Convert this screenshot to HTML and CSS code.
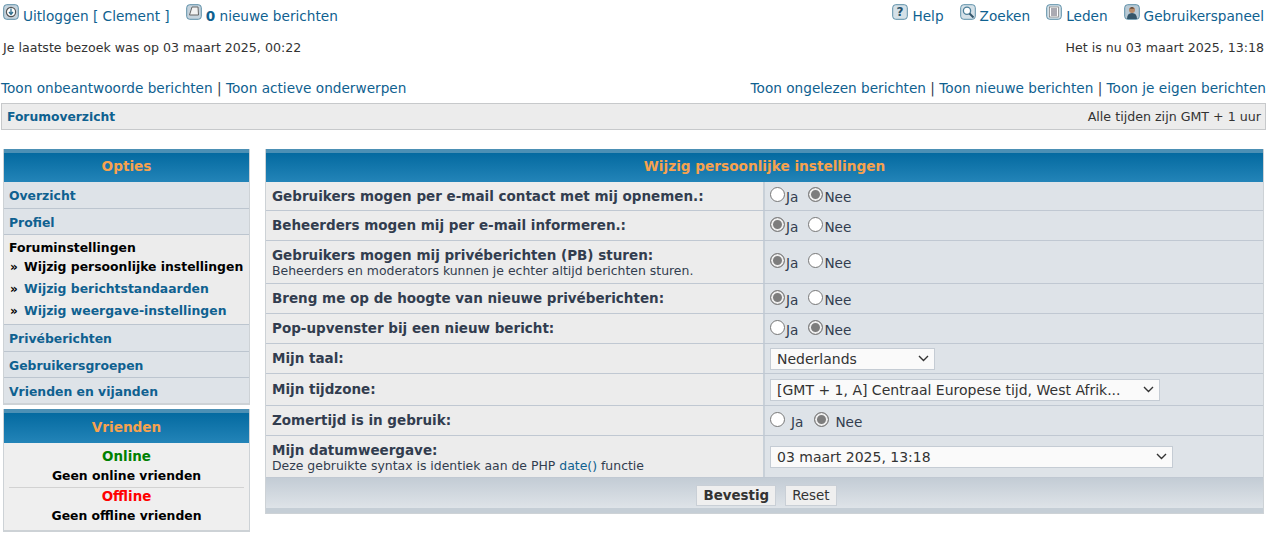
FILE: index.html
```html
<!DOCTYPE html>
<html lang="nl">
<head>
<meta charset="utf-8">
<title>Wijzig persoonlijke instellingen</title>
<link rel="stylesheet" href="styles.css">
</head>
<body>
<div class="top">
  <div class="top-side">
    <a class="ti first" href="#"><svg class="ico" viewBox="0 0 16 16"><rect x=".7" y=".7" width="14.6" height="14.6" rx="3" fill="#c5d3dd" stroke="#5d8fa8"/><circle cx="8" cy="8" r="4.6" fill="#fff" stroke="#555" stroke-width="1.2"/><path d="M8 4.5v5M6 8l2 2.4L10 8" fill="none" stroke="#2f6f8f" stroke-width="1.3"/></svg>Uitloggen [ Clement ]</a>
    <a class="ti" href="#"><svg class="ico" viewBox="0 0 16 16"><rect x=".7" y=".7" width="14.6" height="14.6" rx="3" fill="#c5d3dd" stroke="#5d8fa8"/><path d="M6 3h6l.5 8h-9z" fill="#f2f2f2" stroke="#666"/></svg><b>0</b>&nbsp;nieuwe berichten</a>
  </div>
  <div class="top-side">
    <a class="ti" href="#"><svg class="ico" viewBox="0 0 16 16"><rect x=".7" y=".7" width="14.6" height="14.6" rx="3" fill="#d5e1e8" stroke="#5d8fa8"/><text x="8" y="12.4" text-anchor="middle" class="qm">?</text></svg>Help</a>
    <a class="ti" href="#"><svg class="ico" viewBox="0 0 16 16"><rect x=".7" y=".7" width="14.6" height="14.6" rx="3" fill="#d5e1e8" stroke="#5d8fa8"/><circle cx="7" cy="6.8" r="3.6" fill="#fff" stroke="#4d7f99" stroke-width="1.3"/><path d="M9.5 9.5l4 4" stroke="#33566b" stroke-width="2"/></svg>Zoeken</a>
    <a class="ti" href="#"><svg class="ico" viewBox="0 0 16 16"><rect x=".7" y=".7" width="14.6" height="14.6" rx="3" fill="#d5e1e8" stroke="#5d8fa8"/><rect x="3.5" y="3" width="9" height="10" fill="#fff" stroke="#777" stroke-width=".7"/><path d="M5 5h6M5 7h6M5 9h6M5 11h6" stroke="#445" stroke-width=".9"/></svg>Leden</a>
    <a class="ti" href="#"><svg class="ico" viewBox="0 0 16 16"><rect x=".7" y=".7" width="14.6" height="14.6" rx="3" fill="#b9cad5" stroke="#5d8fa8"/><circle cx="8" cy="6" r="3" fill="#b98a68"/><path d="M5 5.5Q8 1 11 5.5L10.4 4.4H5.6z" fill="#3a2c22"/><path d="M3 15q0-6 5-6t5 6z" fill="#35566a"/></svg>Gebruikerspaneel</a>
  </div>
</div>
<div class="dates"><span>Je laatste bezoek was op 03 maart 2025, 00:22</span><span>Het is nu 03 maart 2025, 13:18</span></div>
<div class="quick">
  <div><a href="#">Toon onbeantwoorde berichten</a> | <a href="#">Toon actieve onderwerpen</a></div>
  <div><a href="#">Toon ongelezen berichten</a> | <a href="#">Toon nieuwe berichten</a> | <a href="#">Toon je eigen berichten</a></div>
</div>
<div class="crumb"><a href="#"><b>Forumoverzicht</b></a><span>Alle tijden zijn GMT + 1 uur</span></div>

<div class="columns">
  <aside class="side">
    <section class="panel">
      <h2 class="head">Opties</h2>
      <a class="item" href="#">Overzicht</a>
      <a class="item" href="#">Profiel</a>
      <div class="group">
        <div class="group-title">Foruminstellingen</div>
        <div class="sub sub-active"><span class="raquo">»</span>Wijzig persoonlijke instellingen</div>
        <div class="sub"><span class="raquo">»</span><a href="#">Wijzig berichtstandaarden</a></div>
        <div class="sub"><span class="raquo">»</span><a href="#">Wijzig weergave-instellingen</a></div>
      </div>
      <a class="item" href="#">Privéberichten</a>
      <a class="item" href="#">Gebruikersgroepen</a>
      <a class="item item-last" href="#">Vrienden en vijanden</a>
    </section>
    <section class="panel friends">
      <h2 class="head head-tall">Vrienden</h2>
      <div class="fbody">
        <div class="fblock">
          <div class="online">Online</div>
          <div>Geen online vrienden</div>
        </div>
        <div class="fblock">
          <div class="offline">Offline</div>
          <div>Geen offline vrienden</div>
        </div>
      </div>
    </section>
  </aside>

  <main class="main">
    <h2 class="head head-main">Wijzig persoonlijke instellingen</h2>
    <div class="row h29"><div class="lab"><b>Gebruikers mogen per e-mail contact met mij opnemen.:</b></div><div class="val"><span class="radio"></span><span class="rl">Ja</span><span class="radio on"></span><span class="rl">Nee</span></div></div>
    <div class="row h30"><div class="lab"><b>Beheerders mogen mij per e-mail informeren.:</b></div><div class="val"><span class="radio on"></span><span class="rl">Ja</span><span class="radio"></span><span class="rl">Nee</span></div></div>
    <div class="row h43"><div class="lab"><b>Gebruikers mogen mij privéberichten (PB) sturen:</b><small>Beheerders en moderators kunnen je echter altijd berichten sturen.</small></div><div class="val"><span class="radio on"></span><span class="rl">Ja</span><span class="radio"></span><span class="rl">Nee</span></div></div>
    <div class="row h30"><div class="lab"><b>Breng me op de hoogte van nieuwe privéberichten:</b></div><div class="val"><span class="radio on"></span><span class="rl">Ja</span><span class="radio"></span><span class="rl">Nee</span></div></div>
    <div class="row h30"><div class="lab"><b>Pop-upvenster bij een nieuw bericht:</b></div><div class="val"><span class="radio"></span><span class="rl">Ja</span><span class="radio on"></span><span class="rl">Nee</span></div></div>
    <div class="row h30"><div class="lab"><b>Mijn taal:</b></div><div class="val"><select class="sel sel-lang"><option>Nederlands</option></select></div></div>
    <div class="row h32"><div class="lab"><b>Mijn tijdzone:</b></div><div class="val"><select class="sel sel-tz"><option>[GMT + 1, A] Centraal Europese tijd, West Afrik...</option></select></div></div>
    <div class="row h30"><div class="lab"><b>Zomertijd is in gebruik:</b></div><div class="val"><span class="radio"></span><span class="rl gap">Ja</span><span class="radio on"></span><span class="rl gap">Nee</span></div></div>
    <div class="row h42"><div class="lab"><b>Mijn datumweergave:</b><small>Deze gebruikte syntax is identiek aan de PHP <a href="#">date()</a> functie</small></div><div class="val"><select class="sel sel-date"><option>03 maart 2025, 13:18</option></select></div></div>
    <div class="actions"><button class="btn btn-main" type="button">Bevestig</button><button class="btn" type="button">Reset</button></div>
  </main>
</div>
</body>
</html>
```
FILE: styles.css
```css
* { box-sizing: border-box; }
html, body { margin: 0; padding: 0; }
body {
  background: #fff;
  color: #323d4f;
  font-family: "DejaVu Sans", Verdana, sans-serif;
  font-size: 13.5px;
  width: 1280px;
  height: 549px;
  overflow: hidden;
}
a { color: #0f6190; text-decoration: none; }
.top {
  display: flex;
  justify-content: space-between;
  padding: 5px 16px 0 3px;
  height: 31px;
  font-size: 13.65px;
}
.top-side { display: flex; }
.ti { display: flex; align-items: flex-start; line-height: 22px; margin-left: 16px; }
.ti.first { margin-left: 0; }
.ico { width: 16px; height: 16px; margin-right: 4px; flex: none; margin-top: -1px; }
.qm { font: bold 12px "DejaVu Sans", sans-serif; fill: #24506a; }
.dates {
  display: flex;
  justify-content: space-between;
  padding: 0 16px 0 3px;
  height: 41px;
  line-height: 34px;
  font-size: 12.6px;
  color: #333;
}
.quick {
  display: flex;
  justify-content: space-between;
  padding: 0 14px 0 1px;
  height: 31px;
  line-height: 32px;
  font-size: 13.65px;
}
.crumb {
  display: flex;
  justify-content: space-between;
  align-items: center;
  margin-left: 1px;
  width: 1265px;
  height: 27px;
  padding: 0 4px 0 5px;
  background: #ececec;
  border: 1px solid #c7c9cb;
  font-size: 12.65px;
  color: #333;
}
.crumb b { font-size: 12.3px; }
.columns {
  display: flex;
  align-items: flex-start;
  padding: 19px 16px 0 3px;
  gap: 15px;
}
.side { width: 247px; flex: none; font-size: 12.4px; }
.panel { border: 1px solid #cdd2d6; border-top: 0; border-bottom-width: 2px; background: #dee3e8; }
.friends { margin-top: 4px; background: #efefef; }
.head {
  margin: 0;
  height: 33px;
  text-align: center;
  color: #f7a24e;
  font-size: 13.65px;
  font-weight: bold;
  background: linear-gradient(#046aa0, #2384b8);
  border-top: 4px solid #4c90b5;
  line-height: 27px;
}
.head-tall { height: 34px; line-height: 28px; }
.item {
  display: block;
  height: 26.5px;
  line-height: 28px;
  padding-left: 5px;
  font-weight: bold;
  border-bottom: 1px solid #bcc5cf;
  background: #dee3e8;
}
.item-last { border-bottom: 0; height: 25px; }
.group {
  background: #ececec;
  height: 90px;
  padding: 5px 5px 0;
  border-bottom: 1px solid #bcc5cf;
  font-weight: bold;
  color: #000;
}
.group-title { line-height: 16px; }
.sub { line-height: 21px; white-space: nowrap; }
.raquo { display: inline-block; font-size: 12px; width: 15px; padding-left: 1px; }
.fbody { padding: 5px 5px 0; height: 87px; text-align: center; font-weight: bold; color: #000; background: #efefef; }
.fblock { line-height: 18.5px; height: 39px; }
.fblock + .fblock { border-top: 1px solid #d2d2d2; }
.online { color: #008000; font-size: 13.45px; }
.offline { color: #f00; font-size: 13.45px; }
.main {
  width: 999px;
  flex: none;
  border: 1px solid #cdd2d6;
  border-top: 0;
  background: #dee3e8;
}
.row { display: flex; border-bottom: 1px solid #c0c8d2; }
.h29 { height: 29px; }
.h30 { height: 30px; }
.h43 { height: 43px; }
.h32 { height: 32px; }
.h42 { height: 42px; }
.lab {
  width: 499px;
  flex: none;
  padding: 0 6px;
  background: #ececec;
  display: flex;
  flex-direction: column;
  justify-content: center;
  border-right: 2px solid #c8d0d8;
  color: #323d4f;
}
.lab small { font-size: 12.45px; line-height: 13px; }
.lab b { line-height: 17px; }
.val { flex: 1; display: flex; align-items: center; padding-left: 5px; }
.radio {
  width: 15px;
  height: 15px;
  flex: none;
  border-radius: 50%;
  background: #fff;
  border: 1px solid #777;
  margin-top: -3px;
}
.radio.on {
  background: #7d7d7d;
  border: 1px solid #7d7d7d;
  box-shadow: inset 0 0 0 2px #eee;
}
.rl { margin: 2px 10px 0 1px; color: #323d4f; font-size: 13.65px; }
.rl.gap { margin: 2px 11px 0 6px; }
.sel {
  appearance: none;
  height: 22px;
  font: 14px "DejaVu Sans", sans-serif;
  color: #333;
  background: #fafafa url("data:image/svg+xml,%3Csvg xmlns='http://www.w3.org/2000/svg' width='11' height='7'%3E%3Cpath d='M1 1l4.5 4.5L10 1' fill='none' stroke='%23333' stroke-width='1.4'/%3E%3C/svg%3E") no-repeat right 5px center;
  border: 1px solid #c5ccd4;
  border-radius: 0;
  padding: 0 20px 0 6px;
}
.sel-lang { width: 165px; }
.sel-tz { width: 390px; }
.sel-date { width: 403px; }
.actions {
  height: 35px;
  display: flex;
  justify-content: center;
  align-items: center;
  gap: 9px;
  background: linear-gradient(#c3ccd5, #dee3e8 85%, #c5ced6 86%);
  padding-left: 4px;
}
.btn {
  height: 21px;
  padding: 0 6px;
  font: 13.4px "DejaVu Sans", sans-serif;
  color: #333;
  background: #efefef;
  border: 1px solid #c9cfd6;
}
.btn-main { font-weight: bold; }
```
